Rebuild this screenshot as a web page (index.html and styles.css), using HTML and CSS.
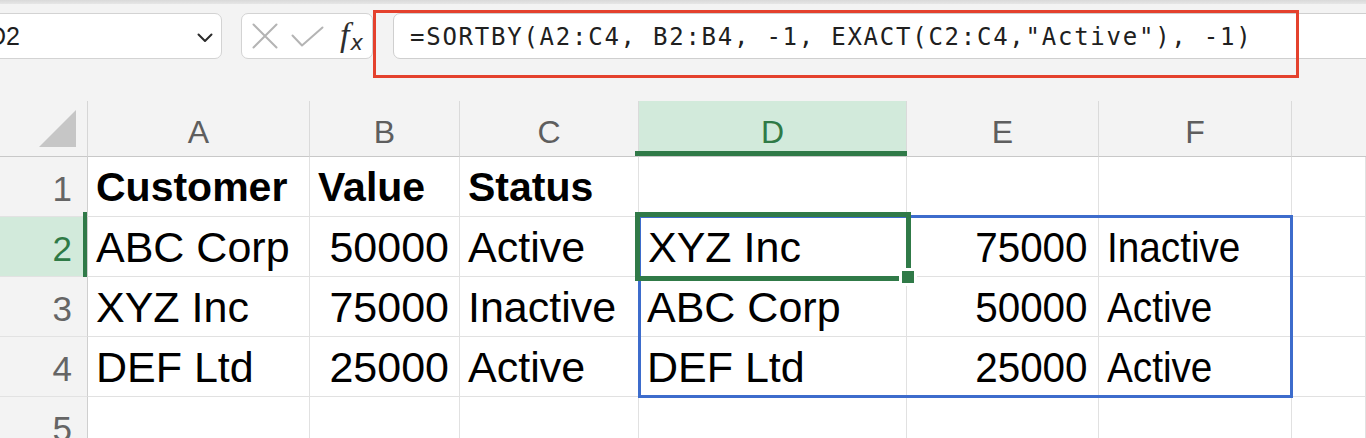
FILE: index.html
```html
<!DOCTYPE html>
<html>
<head>
<meta charset="utf-8">
<link rel="stylesheet" href="styles.css">
</head>
<body>
<div class="app">
  <div class="topline"></div>
  <div class="toolbar">
    <div class="namebox">
      <span class="ref">D2</span>
      <svg class="chev" width="16" height="10" viewBox="0 0 16 10"><path d="M1.5 1.5 L8 8 L14.5 1.5" fill="none" stroke="#2b2b2b" stroke-width="2" stroke-linecap="round" stroke-linejoin="round"/></svg>
    </div>
    <div class="fbtns">
      <svg class="ico" width="26" height="26" viewBox="0 0 26 26"><path d="M1.5 1.5 L24.5 24.5 M24.5 1.5 L1.5 24.5" fill="none" stroke="#b4b4b4" stroke-width="2" stroke-linecap="round"/></svg>
      <svg class="ico" width="33" height="22" viewBox="0 0 33 22"><path d="M1.5 9.5 L11 19.5 L31.5 1.5" fill="none" stroke="#b4b4b4" stroke-width="2" stroke-linecap="round" stroke-linejoin="round"/></svg>
      <span class="fx"><i class="fx-f">f</i><i class="fx-x">x</i></span>
    </div>
    <div class="finput">=SORTBY(A2:C4, B2:B4, -1, EXACT(C2:C4,"Active"), -1)</div>
    <div class="annot"></div>
  </div>
  <div class="sheet">
    <div class="corner"><svg width="37" height="37" viewBox="0 0 37 37"><path d="M37 0 L37 37 L0 37 Z" fill="#c6c6c6"/></svg></div>
    <div class="ch">A</div>
    <div class="ch">B</div>
    <div class="ch">C</div>
    <div class="ch ch-sel">D</div>
    <div class="ch">E</div>
    <div class="ch">F</div>
    <div class="ch ch-last"></div>

    <div class="rh">1</div>
    <div class="c b">Customer</div>
    <div class="c b">Value</div>
    <div class="c b">Status</div>
    <div class="c"></div>
    <div class="c"></div>
    <div class="c"></div>
    <div class="c"></div>

    <div class="rh rh-sel">2</div>
    <div class="c">ABC Corp</div>
    <div class="c r">50000</div>
    <div class="c">Active</div>
    <div class="c c-sel">XYZ Inc<span class="handle"></span></div>
    <div class="c r"><span class="narrow-r">75000</span></div>
    <div class="c"><span class="narrow">Inactive</span></div>
    <div class="c"></div>

    <div class="rh">3</div>
    <div class="c">XYZ Inc</div>
    <div class="c r">75000</div>
    <div class="c">Inactive</div>
    <div class="c">ABC Corp</div>
    <div class="c r"><span class="narrow-r">50000</span></div>
    <div class="c"><span class="narrow">Active</span></div>
    <div class="c"></div>

    <div class="rh">4</div>
    <div class="c">DEF Ltd</div>
    <div class="c r">25000</div>
    <div class="c">Active</div>
    <div class="c">DEF Ltd</div>
    <div class="c r"><span class="narrow-r">25000</span></div>
    <div class="c"><span class="narrow">Active</span></div>
    <div class="c"></div>

    <div class="rh">5</div>
    <div class="c"></div>
    <div class="c"></div>
    <div class="c"></div>
    <div class="c"></div>
    <div class="c"></div>
    <div class="c"></div>
    <div class="c"></div>

    <div class="spill"></div>
  </div>
</div>
</body>
</html>
```

FILE: styles.css
```css
html, body {
  margin: 0;
  padding: 0;
  background: #f3f3f3;
  overflow: hidden;
}
.app {
  width: 1366px;
  height: 438px;
  position: relative;
  overflow: hidden;
  font-family: "Liberation Sans", Arial, sans-serif;
}
.topline {
  height: 4px;
  background: linear-gradient(#d9d9d9, #e6e6e6);
}
.toolbar {
  height: 97px;
  box-sizing: border-box;
  padding-top: 9px;
  display: flex;
  align-items: flex-start;
  gap: 19px;
  position: relative;
}
.namebox {
  margin-left: -25px;
  width: 247px;
  height: 46px;
  box-sizing: border-box;
  background: #fff;
  border: 1px solid #d3d3d3;
  border-radius: 7px;
  display: flex;
  align-items: center;
  justify-content: space-between;
  padding: 0 8px 0 12px;
  flex-shrink: 0;
}
.ref {
  font-size: 25px;
  color: #1e1e1e;
  margin-top: 1px;
}
.chev { margin-top: 3px; }
.fbtns {
  width: 132px;
  height: 46px;
  box-sizing: border-box;
  background: #fff;
  border: 1px solid #d3d3d3;
  border-radius: 7px;
  display: flex;
  align-items: center;
  padding-left: 10px;
  gap: 13px;
  flex-shrink: 0;
}
.fbtns .ico:nth-child(2) { margin-top: 1px; }
.fx {
  display: flex;
  align-items: baseline;
  color: #2e2e2e;
  margin-left: 3px;
  margin-top: -2px;
}
.fx-f {
  font-family: "Liberation Serif", serif;
  font-size: 34px;
  font-style: italic;
}
.fx-x {
  font-family: "DejaVu Sans", sans-serif;
  font-size: 21px;
  font-style: italic;
  margin-left: 1px;
  position: relative;
  top: 4px;
}
.finput {
  flex: 1;
  margin-left: 1px;
  margin-right: -30px;
  height: 46px;
  box-sizing: border-box;
  background: #fff;
  border: 1px solid #cfcfcf;
  border-radius: 7px;
  padding-left: 16px;
  font-family: "DejaVu Sans Mono", "Liberation Mono", monospace;
  font-size: 24px;
  letter-spacing: 1.75px;
  line-height: 46px;
  color: #202020;
  white-space: nowrap;
}
.annot {
  position: absolute;
  left: 373px;
  top: 6px;
  width: 926px;
  height: 68px;
  box-sizing: border-box;
  border: 3px solid #e4412d;
}
.sheet {
  position: relative;
  display: grid;
  grid-template-columns: 88px 222px 150px 179px 268px 192px 193px 1fr;
  grid-template-rows: 56px repeat(5, 60px);
  background: #fff;
}
.corner {
  background: #f3f3f3;
  border-right: 1px solid #d6d6d6;
  border-bottom: 1px solid #c8c8c8;
  box-sizing: border-box;
  display: flex;
  justify-content: flex-end;
  align-items: flex-start;
  padding: 9px 11px 0 0;
}
.ch {
  background: #f3f3f3;
  border-right: 1px solid #dadada;
  border-bottom: 1px solid #c8c8c8;
  box-sizing: border-box;
  text-align: center;
  font-size: 32px;
  color: #5e5e5e;
  line-height: 50px;
  padding-top: 6px;
  position: relative;
}
.ch-last { border-right: none; }
.ch-sel {
  background: #d2eadb;
  color: #2f7a46;
}
.ch-sel::after {
  content: "";
  position: absolute;
  left: -4px;
  right: -5px;
  bottom: 0;
  height: 5px;
  background: #307a48;
}
.rh {
  background: #f3f3f3;
  border-right: 1px solid #cfcfcf;
  border-bottom: 1px solid #e2e2e2;
  box-sizing: border-box;
  text-align: right;
  padding-right: 15px;
  padding-top: 4px;
  font-size: 35px;
  line-height: 56px;
  color: #656565;
  position: relative;
}
.rh-sel {
  background: #d2eadb;
  color: #2f7a46;
}
.rh-sel::after {
  content: "";
  position: absolute;
  right: 0;
  width: 4px;
  top: -5px;
  bottom: -5px;
  background: #307a48;
}
.c {
  border-right: 1px solid #e1e1e1;
  border-bottom: 1px solid #e1e1e1;
  box-sizing: border-box;
  font-size: 43px;
  line-height: 60px;
  color: #000;
  padding-left: 8px;
  white-space: nowrap;
  overflow: visible;
  position: relative;
}
.c.b { font-weight: bold; font-size: 41px; }
.c.r { text-align: right; padding-right: 10px; padding-left: 0; }
.narrow {
  display: inline-block;
  transform: scaleX(0.9);
  transform-origin: left center;
}
.narrow-r {
  display: inline-block;
  transform: scaleX(0.94);
  transform-origin: right center;
}
.c-sel { padding-left: 9px; }
.c-sel::after {
  content: "";
  position: absolute;
  left: -4px;
  right: -5px;
  top: -5px;
  bottom: -5px;
  border: 5px solid #307a48;
  z-index: 3;
}
.handle {
  position: absolute;
  right: -11px;
  bottom: -10px;
  width: 12px;
  height: 12px;
  background: #307a48;
  border: 3px solid #fff;
  z-index: 4;
}
.spill {
  position: absolute;
  left: 638px;
  top: 114px;
  width: 655px;
  height: 183px;
  box-sizing: border-box;
  border: 3px solid #3d6ccc;
  z-index: 2;
}
```
